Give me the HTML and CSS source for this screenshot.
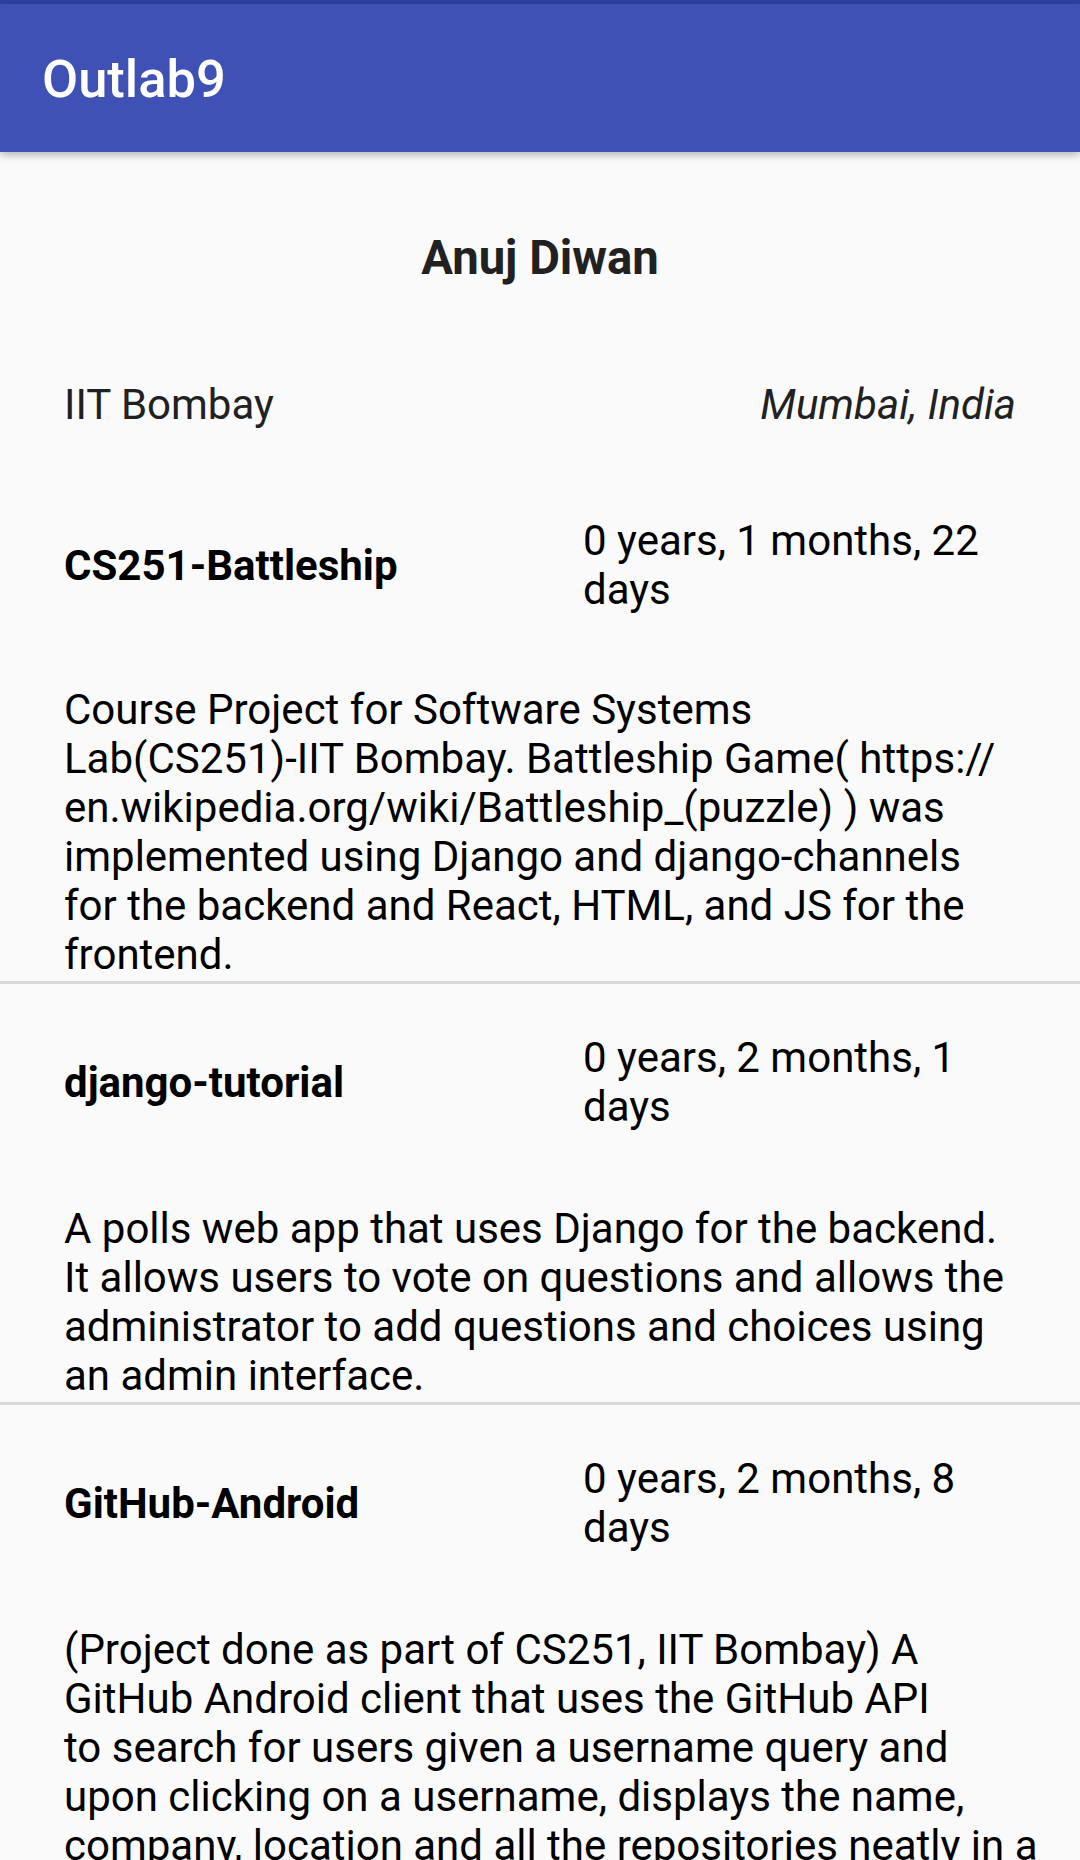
FILE: index.html
```html
<!DOCTYPE html>
<html lang="en">
<head>
<meta charset="utf-8">
<title>Outlab9</title>
<link rel="stylesheet" href="styles.css">
</head>
<body>
<div class="statusbar"></div>
<header class="appbar"><h1 class="appbar-title">Outlab9</h1></header>
<main class="content">
  <h2 class="name">Anuj Diwan</h2>
  <div class="info">
    <span class="org">IIT Bombay</span>
    <span class="loc">Mumbai, India</span>
  </div>

  <section class="item">
    <div class="item-head">
      <span class="item-title">CS251-Battleship</span>
      <span class="item-dur">0 years, 1 months, 22 days</span>
    </div>
    <p class="item-desc">Course Project for Software Systems<br>Lab(CS251)-IIT Bombay. Battleship Game( https://<br>en.wikipedia.org/wiki/Battleship_(puzzle) ) was<br>implemented using Django and django-channels<br>for the backend and React, HTML, and JS for the<br>frontend.</p>
  </section>

  <section class="item">
    <div class="item-head">
      <span class="item-title">django-tutorial</span>
      <span class="item-dur">0 years, 2 months, 1 days</span>
    </div>
    <p class="item-desc">A polls web app that uses Django for the backend.<br>It allows users to vote on questions and allows the<br>administrator to add questions and choices using<br>an admin interface.</p>
  </section>

  <section class="item">
    <div class="item-head">
      <span class="item-title">GitHub-Android</span>
      <span class="item-dur">0 years, 2 months, 8 days</span>
    </div>
    <p class="item-desc">(Project done as part of CS251, IIT Bombay) A<br>GitHub Android client that uses the GitHub API<br>to search for users given a username query and<br>upon clicking on a username, displays the name,<br>company, location and all the repositories neatly in a</p>
  </section>
</main>
</body>
</html>
```

FILE: styles.css
```css
* { box-sizing: border-box; }

html, body {
  margin: 0;
  padding: 0;
}

body {
  background: #fafafa;
  font-family: Roboto, "Noto Sans", sans-serif;
  color: #000;
  width: 1080px;
  overflow-x: hidden;
}

.statusbar {
  height: 4px;
  background: #3040a0;
}

.appbar {
  position: relative;
  z-index: 1;
  height: 148px;
  background: #3f51b5;
  display: flex;
  align-items: center;
  padding: 4px 0 0 42px;
  box-shadow: 0 3px 8px rgba(0, 0, 0, 0.28);
}

.appbar-title {
  margin: 0;
  font-size: 52.5px;
  font-weight: 500;
  color: #fff;
  line-height: 1.172;
}

.content {
  padding-top: 79px;
}

.name {
  margin: 0;
  text-align: center;
  font-size: 47.25px;
  font-weight: 700;
  color: #212121;
  line-height: 55px;
}

.info {
  display: flex;
  justify-content: space-between;
  margin-top: 94px;
  margin-bottom: 37px;
  padding: 0 64px;
  font-size: 42px;
  line-height: 49px;
  color: #212121;
}

.loc {
  font-style: italic;
}

.item {
  padding-top: 50px;
  border-bottom: 3px solid #d9d9d9;
}

.item + .item {
  padding-top: 49px;
}

.item-head {
  display: grid;
  grid-template-columns: 519px 1fr;
  align-items: center;
  padding: 0 64px;
  font-size: 42px;
  line-height: 49px;
}

.item-title {
  font-weight: 700;
}

.item-dur {
  font-weight: 400;
}

.item-desc {
  margin: 71px 0 2px;
  padding: 0 24px 0 64px;
  font-size: 42px;
  line-height: 49px;
  white-space: nowrap;
}

.item + .item .item-desc {
  margin-top: 73px;
}
```
